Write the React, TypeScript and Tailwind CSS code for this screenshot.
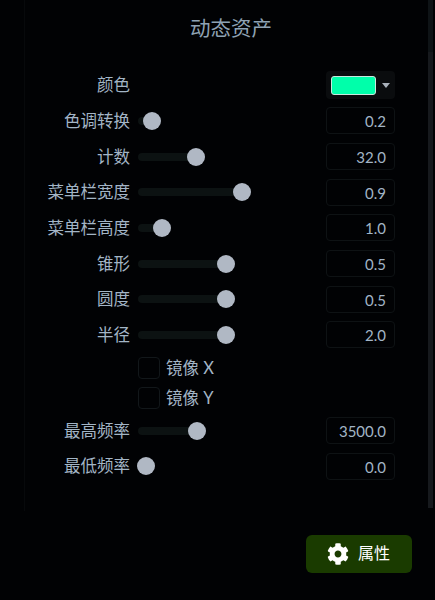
import { FaCog } from "react-icons/fa";

function Label({ children }: { children: string }) {
  return <div className="w-[105px] shrink-0 text-right text-[16.5px] leading-[20px] text-[#a3b5c6]">{children}</div>;
}

function Slider({ thumb, width }: { thumb: number; width: number }) {
  return (
    <div className="relative ml-[8px] h-[20px] w-[104px]">
      <div className="absolute left-0 top-[6px] h-[8px] rounded-full bg-[#0c1212]" style={{ width }} />
      <div className="absolute top-[1px] h-[18px] w-[18px] rounded-full bg-[#b0b8c4]" style={{ left: thumb }} />
    </div>
  );
}

function Value({ children }: { children: string }) {
  return (
    <div className="ml-auto h-[27px] w-[69px] rounded-[4px] border border-[#0e1214] pr-[8px] text-right text-[15px] leading-[27px] text-[#a3b5c6]">
      {children}
    </div>
  );
}

const rows = [
  ["色调转换", 5, 20, "0.2"],
  ["计数", 49, 65, "32.0"],
  ["菜单栏宽度", 95, 110, "0.9"],
  ["菜单栏高度", 15, 30, "1.0"],
  ["锥形", 79, 95, "0.5"],
  ["圆度", 79, 95, "0.5"],
  ["半径", 79, 95, "2.0"],
] as const;

function Row({ label, thumb, width, value }: { label: string; thumb: number; width: number; value: string }) {
  return (
    <div className="flex h-[35.7px] items-center">
      <Label>{label}</Label>
      <Slider thumb={thumb} width={width} />
      <Value>{value}</Value>
    </div>
  );
}

function Check({ label }: { label: string }) {
  return (
    <div className="flex h-[30px] items-center pl-[113px]">
      <div className="h-[22px] w-[22px] rounded-[4px] border border-[#12171a]" />
      <span className="ml-[6px] text-[16.5px] leading-[20px] text-[#a3b5c6]">{label}</span>
    </div>
  );
}

export default function App() {
  return (
    <div
      className="flex h-[600px] w-[435px] flex-col overflow-hidden bg-[#010204]"
      style={{ fontFamily: '"Lato", "Noto Sans CJK SC", sans-serif' }}
    >
      <div className="flex h-[511px] pl-[24px]">
        <div className="w-[404px] border-l border-[#07090b] pr-[33px]">
          <div className="mr-[-33px] pl-[9px] pt-[14px] text-center text-[20.5px] leading-[28px] text-[#8fa2b4]">动态资产</div>
          <div className="mt-[25px] flex h-[36px] items-center">
            <Label>颜色</Label>
            <div className="ml-auto flex h-[28px] w-[69px] items-center rounded-[4px] bg-[#0a0c0e] pl-[5px]">
              <div className="h-[19px] w-[45px] rounded-[3px] border border-[#c9e8de] bg-[#00ffaa]" />
              <div className="ml-[6px] h-0 w-0 border-x-[4px] border-t-[5px] border-x-transparent border-t-[#a9b1bb]" />
            </div>
          </div>
          <div>
            {rows.map(([l, t, w, v]) => (
              <Row key={l} label={l} thumb={t} width={w} value={v} />
            ))}
          </div>
          <Check label="镜像 X" />
          <Check label="镜像 Y" />
          <Row label="最高频率" thumb={50} width={65} value="3500.0" />
          <Row label="最低频率" thumb={-1} width={0} value="0.0" />
        </div>
        <div className="mb-[3px] flex w-[5px] flex-col">
          <div className="h-[52px] bg-[#0e1316]" />
          <div className="flex-1 bg-[#16191d]" />
        </div>
      </div>
      <div className="flex justify-end pr-[23px] pt-[24px]">
        <div className="flex h-[38px] w-[106px] items-center rounded-[6px] bg-[#1a3b00] pl-[21px] text-white">
          <FaCog size={22} color="white" />
          <span className="mb-[2px] ml-[9px] text-[16px] leading-[20px]">属性</span>
        </div>
      </div>
    </div>
  );
}
